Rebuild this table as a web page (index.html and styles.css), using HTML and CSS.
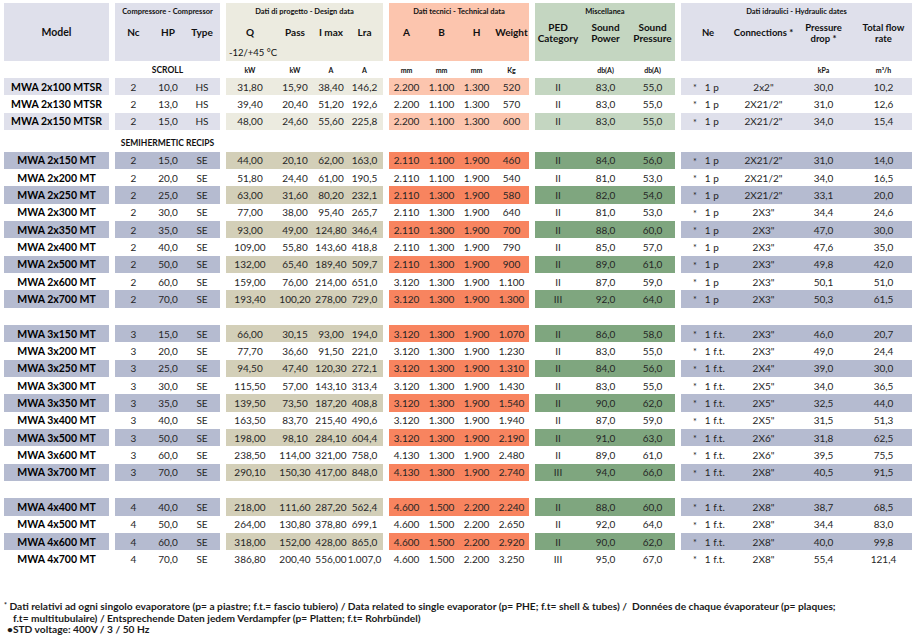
FILE: index.html
```html
<!DOCTYPE html>
<html>
<head>
<meta charset="utf-8">
<title>MWA data</title>
<link rel="stylesheet" href="styles.css">
</head>
<body>
<div class="sheet">
  <div class="row head">
    <div class="g m hl"><span class="mh">Model</span></div>
    <div class="g c hl"><span class="tt">Compressore - Compressor</span><b>Nc</b><b>HP</b><b>Type</b></div>
    <div class="g d hl"><span class="tt">Dati di progetto - Design data</span><b>Q</b><b>Pass</b><b>I max</b><b>Lra</b><span class="temp">-12/+45 °C</span></div>
    <div class="g t hl"><span class="tt">Dati tecnici - Technical data</span><b>A</b><b>B</b><b>H</b><b>Weight</b></div>
    <div class="g x hl"><span class="tt">Miscellanea</span><b>PED<br>Category</b><b>Sound<br>Power</b><b>Sound<br>Pressure</b></div>
    <div class="g h hl"><span class="tt">Dati idraulici - Hydraulic dates</span><b>Ne</b><b>Connections *</b><b>Pressure<br>drop *</b><b>Total flow<br>rate</b></div>
  </div>

  <div class="row units">
    <div class="g m"></div>
    <div class="g c"><span class="sec">SCROLL</span></div>
    <div class="g d"><span>kW</span><span>kW</span><span>A</span><span>A</span></div>
    <div class="g t"><span>mm</span><span>mm</span><span>mm</span><span>Kg</span></div>
    <div class="g x"><span></span><span>db(A)</span><span>db(A)</span></div>
    <div class="g h"><span></span><span></span><span>kPa</span><span>m³/h</span></div>
  </div>

  <div class="row hl">
    <div class="g m"><span>MWA 2x100 MTSR</span></div>
    <div class="g c"><span>2</span><span>10,0</span><span>HS</span></div>
    <div class="g d"><span>31,80</span><span>15,90</span><span>38,40</span><span>146,2</span></div>
    <div class="g t"><span>2.200</span><span>1.100</span><span>1.300</span><span>520</span></div>
    <div class="g x"><span>II</span><span>83,0</span><span>55,0</span></div>
    <div class="g h"><span class="ne"><i>*</i>1 p</span><span>2x2"</span><span>30,0</span><span>10,2</span></div>
  </div>
  <div class="row">
    <div class="g m"><span>MWA 2x130 MTSR</span></div>
    <div class="g c"><span>2</span><span>13,0</span><span>HS</span></div>
    <div class="g d"><span>39,40</span><span>20,40</span><span>51,20</span><span>192,6</span></div>
    <div class="g t"><span>2.200</span><span>1.100</span><span>1.300</span><span>570</span></div>
    <div class="g x"><span>II</span><span>83,0</span><span>55,0</span></div>
    <div class="g h"><span class="ne"><i>*</i>1 p</span><span>2X21/2"</span><span>31,0</span><span>12,6</span></div>
  </div>
  <div class="row hl">
    <div class="g m"><span>MWA 2x150 MTSR</span></div>
    <div class="g c"><span>2</span><span>15,0</span><span>HS</span></div>
    <div class="g d"><span>48,00</span><span>24,60</span><span>55,60</span><span>225,8</span></div>
    <div class="g t"><span>2.200</span><span>1.100</span><span>1.300</span><span>600</span></div>
    <div class="g x"><span>II</span><span>83,0</span><span>55,0</span></div>
    <div class="g h"><span class="ne"><i>*</i>1 p</span><span>2X21/2"</span><span>34,0</span><span>15,4</span></div>
  </div>

  <div class="row label">
    <div class="g m"></div>
    <div class="g c"><span class="sec">SEMIHERMETIC RECIPS</span></div>
  </div>

  <div class="row dk">
    <div class="g m"><span>MWA 2x150 MT</span></div>
    <div class="g c"><span>2</span><span>15,0</span><span>SE</span></div>
    <div class="g d"><span>44,00</span><span>20,10</span><span>62,00</span><span>163,0</span></div>
    <div class="g t"><span>2.110</span><span>1.100</span><span>1.900</span><span>460</span></div>
    <div class="g x"><span>II</span><span>84,0</span><span>56,0</span></div>
    <div class="g h"><span class="ne"><i>*</i>1 p</span><span>2X21/2"</span><span>31,0</span><span>14,0</span></div>
  </div>
  <div class="row">
    <div class="g m"><span>MWA 2x200 MT</span></div>
    <div class="g c"><span>2</span><span>20,0</span><span>SE</span></div>
    <div class="g d"><span>51,80</span><span>24,40</span><span>61,00</span><span>190,5</span></div>
    <div class="g t"><span>2.110</span><span>1.100</span><span>1.900</span><span>540</span></div>
    <div class="g x"><span>II</span><span>81,0</span><span>53,0</span></div>
    <div class="g h"><span class="ne"><i>*</i>1 p</span><span>2X21/2"</span><span>34,0</span><span>16,5</span></div>
  </div>
  <div class="row dk">
    <div class="g m"><span>MWA 2x250 MT</span></div>
    <div class="g c"><span>2</span><span>25,0</span><span>SE</span></div>
    <div class="g d"><span>63,00</span><span>31,60</span><span>80,20</span><span>232,1</span></div>
    <div class="g t"><span>2.110</span><span>1.300</span><span>1.900</span><span>580</span></div>
    <div class="g x"><span>II</span><span>82,0</span><span>54,0</span></div>
    <div class="g h"><span class="ne"><i>*</i>1 p</span><span>2X21/2"</span><span>33,1</span><span>20,0</span></div>
  </div>
  <div class="row">
    <div class="g m"><span>MWA 2x300 MT</span></div>
    <div class="g c"><span>2</span><span>30,0</span><span>SE</span></div>
    <div class="g d"><span>77,00</span><span>38,00</span><span>95,40</span><span>265,7</span></div>
    <div class="g t"><span>2.110</span><span>1.300</span><span>1.900</span><span>640</span></div>
    <div class="g x"><span>II</span><span>81,0</span><span>53,0</span></div>
    <div class="g h"><span class="ne"><i>*</i>1 p</span><span>2X3"</span><span>34,4</span><span>24,6</span></div>
  </div>
  <div class="row dk">
    <div class="g m"><span>MWA 2x350 MT</span></div>
    <div class="g c"><span>2</span><span>35,0</span><span>SE</span></div>
    <div class="g d"><span>93,00</span><span>49,00</span><span>124,80</span><span>346,4</span></div>
    <div class="g t"><span>2.110</span><span>1.300</span><span>1.900</span><span>700</span></div>
    <div class="g x"><span>II</span><span>88,0</span><span>60,0</span></div>
    <div class="g h"><span class="ne"><i>*</i>1 p</span><span>2X3"</span><span>47,0</span><span>30,0</span></div>
  </div>
  <div class="row">
    <div class="g m"><span>MWA 2x400 MT</span></div>
    <div class="g c"><span>2</span><span>40,0</span><span>SE</span></div>
    <div class="g d"><span>109,00</span><span>55,80</span><span>143,60</span><span>418,8</span></div>
    <div class="g t"><span>2.110</span><span>1.300</span><span>1.900</span><span>790</span></div>
    <div class="g x"><span>II</span><span>85,0</span><span>57,0</span></div>
    <div class="g h"><span class="ne"><i>*</i>1 p</span><span>2X3"</span><span>47,6</span><span>35,0</span></div>
  </div>
  <div class="row dk">
    <div class="g m"><span>MWA 2x500 MT</span></div>
    <div class="g c"><span>2</span><span>50,0</span><span>SE</span></div>
    <div class="g d"><span>132,00</span><span>65,40</span><span>189,40</span><span>509,7</span></div>
    <div class="g t"><span>2.110</span><span>1.300</span><span>1.900</span><span>900</span></div>
    <div class="g x"><span>II</span><span>89,0</span><span>61,0</span></div>
    <div class="g h"><span class="ne"><i>*</i>1 p</span><span>2X3"</span><span>49,8</span><span>42,0</span></div>
  </div>
  <div class="row">
    <div class="g m"><span>MWA 2x600 MT</span></div>
    <div class="g c"><span>2</span><span>60,0</span><span>SE</span></div>
    <div class="g d"><span>159,00</span><span>76,00</span><span>214,00</span><span>651,0</span></div>
    <div class="g t"><span>3.120</span><span>1.300</span><span>1.900</span><span>1.100</span></div>
    <div class="g x"><span>II</span><span>87,0</span><span>59,0</span></div>
    <div class="g h"><span class="ne"><i>*</i>1 p</span><span>2X3"</span><span>50,1</span><span>51,0</span></div>
  </div>
  <div class="row dk">
    <div class="g m"><span>MWA 2x700 MT</span></div>
    <div class="g c"><span>2</span><span>70,0</span><span>SE</span></div>
    <div class="g d"><span>193,40</span><span>100,20</span><span>278,00</span><span>729,0</span></div>
    <div class="g t"><span>3.120</span><span>1.300</span><span>1.900</span><span>1.300</span></div>
    <div class="g x"><span>III</span><span>92,0</span><span>64,0</span></div>
    <div class="g h"><span class="ne"><i>*</i>1 p</span><span>2X3"</span><span>50,3</span><span>61,5</span></div>
  </div>

  <div class="row spacer"></div>

  <div class="row dk">
    <div class="g m"><span>MWA 3x150 MT</span></div>
    <div class="g c"><span>3</span><span>15,0</span><span>SE</span></div>
    <div class="g d"><span>66,00</span><span>30,15</span><span>93,00</span><span>194,0</span></div>
    <div class="g t"><span>3.120</span><span>1.300</span><span>1.900</span><span>1.070</span></div>
    <div class="g x"><span>II</span><span>86,0</span><span>58,0</span></div>
    <div class="g h"><span class="ne"><i>*</i>1 f.t.</span><span>2X3"</span><span>46,0</span><span>20,7</span></div>
  </div>
  <div class="row">
    <div class="g m"><span>MWA 3x200 MT</span></div>
    <div class="g c"><span>3</span><span>20,0</span><span>SE</span></div>
    <div class="g d"><span>77,70</span><span>36,60</span><span>91,50</span><span>221,0</span></div>
    <div class="g t"><span>3.120</span><span>1.300</span><span>1.900</span><span>1.230</span></div>
    <div class="g x"><span>II</span><span>83,0</span><span>55,0</span></div>
    <div class="g h"><span class="ne"><i>*</i>1 f.t.</span><span>2X3"</span><span>49,0</span><span>24,4</span></div>
  </div>
  <div class="row dk">
    <div class="g m"><span>MWA 3x250 MT</span></div>
    <div class="g c"><span>3</span><span>25,0</span><span>SE</span></div>
    <div class="g d"><span>94,50</span><span>47,40</span><span>120,30</span><span>272,1</span></div>
    <div class="g t"><span>3.120</span><span>1.300</span><span>1.900</span><span>1.310</span></div>
    <div class="g x"><span>II</span><span>84,0</span><span>56,0</span></div>
    <div class="g h"><span class="ne"><i>*</i>1 f.t.</span><span>2X4"</span><span>39,0</span><span>30,0</span></div>
  </div>
  <div class="row">
    <div class="g m"><span>MWA 3x300 MT</span></div>
    <div class="g c"><span>3</span><span>30,0</span><span>SE</span></div>
    <div class="g d"><span>115,50</span><span>57,00</span><span>143,10</span><span>313,4</span></div>
    <div class="g t"><span>3.120</span><span>1.300</span><span>1.900</span><span>1.430</span></div>
    <div class="g x"><span>II</span><span>83,0</span><span>55,0</span></div>
    <div class="g h"><span class="ne"><i>*</i>1 f.t.</span><span>2X5"</span><span>34,0</span><span>36,5</span></div>
  </div>
  <div class="row dk">
    <div class="g m"><span>MWA 3x350 MT</span></div>
    <div class="g c"><span>3</span><span>35,0</span><span>SE</span></div>
    <div class="g d"><span>139,50</span><span>73,50</span><span>187,20</span><span>408,8</span></div>
    <div class="g t"><span>3.120</span><span>1.300</span><span>1.900</span><span>1.540</span></div>
    <div class="g x"><span>II</span><span>90,0</span><span>62,0</span></div>
    <div class="g h"><span class="ne"><i>*</i>1 f.t.</span><span>2X5"</span><span>32,5</span><span>44,0</span></div>
  </div>
  <div class="row">
    <div class="g m"><span>MWA 3x400 MT</span></div>
    <div class="g c"><span>3</span><span>40,0</span><span>SE</span></div>
    <div class="g d"><span>163,50</span><span>83,70</span><span>215,40</span><span>490,6</span></div>
    <div class="g t"><span>3.120</span><span>1.300</span><span>1.900</span><span>1.940</span></div>
    <div class="g x"><span>II</span><span>87,0</span><span>59,0</span></div>
    <div class="g h"><span class="ne"><i>*</i>1 f.t.</span><span>2X5"</span><span>31,5</span><span>51,3</span></div>
  </div>
  <div class="row dk">
    <div class="g m"><span>MWA 3x500 MT</span></div>
    <div class="g c"><span>3</span><span>50,0</span><span>SE</span></div>
    <div class="g d"><span>198,00</span><span>98,10</span><span>284,10</span><span>604,4</span></div>
    <div class="g t"><span>3.120</span><span>1.300</span><span>1.900</span><span>2.190</span></div>
    <div class="g x"><span>II</span><span>91,0</span><span>63,0</span></div>
    <div class="g h"><span class="ne"><i>*</i>1 f.t.</span><span>2X6"</span><span>31,8</span><span>62,5</span></div>
  </div>
  <div class="row">
    <div class="g m"><span>MWA 3x600 MT</span></div>
    <div class="g c"><span>3</span><span>60,0</span><span>SE</span></div>
    <div class="g d"><span>238,50</span><span>114,00</span><span>321,00</span><span>758,0</span></div>
    <div class="g t"><span>4.130</span><span>1.300</span><span>1.900</span><span>2.480</span></div>
    <div class="g x"><span>II</span><span>89,0</span><span>61,0</span></div>
    <div class="g h"><span class="ne"><i>*</i>1 f.t.</span><span>2X6"</span><span>39,5</span><span>75,5</span></div>
  </div>
  <div class="row dk">
    <div class="g m"><span>MWA 3x700 MT</span></div>
    <div class="g c"><span>3</span><span>70,0</span><span>SE</span></div>
    <div class="g d"><span>290,10</span><span>150,30</span><span>417,00</span><span>848,0</span></div>
    <div class="g t"><span>4.130</span><span>1.300</span><span>1.900</span><span>2.740</span></div>
    <div class="g x"><span>III</span><span>94,0</span><span>66,0</span></div>
    <div class="g h"><span class="ne"><i>*</i>1 f.t.</span><span>2X8"</span><span>40,5</span><span>91,5</span></div>
  </div>

  <div class="row spacer"></div>

  <div class="row dk">
    <div class="g m"><span>MWA 4x400 MT</span></div>
    <div class="g c"><span>4</span><span>40,0</span><span>SE</span></div>
    <div class="g d"><span>218,00</span><span>111,60</span><span>287,20</span><span>562,4</span></div>
    <div class="g t"><span>4.600</span><span>1.500</span><span>2.200</span><span>2.240</span></div>
    <div class="g x"><span>II</span><span>88,0</span><span>60,0</span></div>
    <div class="g h"><span class="ne"><i>*</i>1 f.t.</span><span>2X8"</span><span>38,7</span><span>68,5</span></div>
  </div>
  <div class="row">
    <div class="g m"><span>MWA 4x500 MT</span></div>
    <div class="g c"><span>4</span><span>50,0</span><span>SE</span></div>
    <div class="g d"><span>264,00</span><span>130,80</span><span>378,80</span><span>699,1</span></div>
    <div class="g t"><span>4.600</span><span>1.500</span><span>2.200</span><span>2.650</span></div>
    <div class="g x"><span>II</span><span>92,0</span><span>64,0</span></div>
    <div class="g h"><span class="ne"><i>*</i>1 f.t.</span><span>2X8"</span><span>34,4</span><span>83,0</span></div>
  </div>
  <div class="row dk">
    <div class="g m"><span>MWA 4x600 MT</span></div>
    <div class="g c"><span>4</span><span>60,0</span><span>SE</span></div>
    <div class="g d"><span>318,00</span><span>152,00</span><span>428,00</span><span>865,0</span></div>
    <div class="g t"><span>4.600</span><span>1.500</span><span>2.200</span><span>2.920</span></div>
    <div class="g x"><span>II</span><span>90,0</span><span>62,0</span></div>
    <div class="g h"><span class="ne"><i>*</i>1 f.t.</span><span>2X8"</span><span>40,0</span><span>99,8</span></div>
  </div>
  <div class="row">
    <div class="g m"><span>MWA 4x700 MT</span></div>
    <div class="g c"><span>4</span><span>70,0</span><span>SE</span></div>
    <div class="g d"><span>386,80</span><span>200,40</span><span>556,00</span><span>1.007,0</span></div>
    <div class="g t"><span>4.600</span><span>1.500</span><span>2.200</span><span>3.250</span></div>
    <div class="g x"><span>III</span><span>95,0</span><span>67,0</span></div>
    <div class="g h"><span class="ne"><i>*</i>1 f.t.</span><span>2X8"</span><span>55,4</span><span>121,4</span></div>
  </div>
</div>

<div class="notes">
  <p><span class="st">*</span> Dati relativi ad ogni singolo evaporatore (p= a piastre; f.t.= fascio tubiero) / Data related to single evaporator (p= PHE; f.t= shell &amp; tubes) /&nbsp; Données de chaque évaporateur (p= plaques;</p>
  <p class="ind">f.t= multitubulaire) / Entsprechende Daten jedem Verdampfer (p= Platten; f.t= Rohrbündel)</p>
  <p class="v">•STD voltage: 400V / 3 / 50 Hz</p>
</div>
</body>
</html>
```

FILE: styles.css
```css
html, body {
  margin: 0;
  background: #ffffff;
}

body {
  padding: 3px 6px 0 4px;
  font-family: Lato, "Open Sans", "DejaVu Sans", sans-serif;
  color: #262626;
}

.sheet {
  width: 908px;
  display: flex;
  flex-direction: column;
}

.row {
  display: flex;
  gap: 6px;
  height: 17.33px;
}

.g {
  display: grid;
  align-items: center;
  height: 100%;
}

.g > span,
.g > b {
  display: flex;
  justify-content: center;
  white-space: nowrap;
  font-size: 10px;
}

.m { width: 105px; grid-template-columns: 1fr; }
.c { width: 105px; grid-template-columns: 37px 32px 36px; }
.d { width: 157px; grid-template-columns: 48px 42px 30px 37px; }
.t { width: 140px; grid-template-columns: repeat(4, 35px); }
.x { width: 140px; grid-template-columns: 46px 49px 45px; }
.h { width: 231px; grid-template-columns: 54px 57px 63px 57px; }

.m > span {
  font-weight: 700;
  font-size: 10.5px;
  color: #000;
}

.h > .ne {
  justify-content: flex-start;
  align-items: center;
  padding-left: 12px;
}

.ne i {
  font-style: normal;
  font-size: 9px;
  line-height: 1;
  margin-right: 8px;
  position: relative;
  top: 1px;
}

/* light rows & header */
.hl .m, .hl .c, .hl .h, .head .hl.m, .head .hl.c, .head .hl.h { background: #dfe0eb; }
.hl .d, .head .hl.d { background: #ecebe0; }
.hl .t, .head .hl.t { background: #fcc5ae; }
.hl .x, .head .hl.x { background: #c4d6c1; }

/* dark rows */
.dk .m, .dk .c, .dk .h { background: #b5bbd0; }
.dk .d { background: #d3cfb8; }
.dk .t { background: #f8845f; }
.dk .x { background: #7fa67f; }

/* header */
.head {
  height: 58px;
}

.head .g {
  grid-template-rows: 16px 27px 15px;
  align-items: center;
}

.head .m {
  grid-template-rows: 1fr;
}

.head .g > .tt {
  grid-column: 1 / -1;
  font-size: 7.5px;
  font-weight: 700;
  color: #111;
  padding-top: 1px;
}

.head .g > b {
  font-size: 10px;
  font-weight: 700;
  color: #111;
  text-align: center;
  line-height: 11px;
}

.head .h > b {
  font-size: 9.5px;
}

.head .m > .mh {
  font-size: 10.5px;
  font-weight: 700;
  color: #111;
}

.head .d > .temp {
  grid-column: 1 / 3;
  justify-content: flex-start;
  padding-left: 3px;
  font-size: 9.5px;
  align-self: start;
  margin-top: 1px;
  color: #111;
}

/* units */
.units {
  height: 17px;
}

.units .g > span {
  font-size: 7px;
  font-weight: 700;
  color: #111;
}

.units .g > .sec,
.label .g > .sec {
  grid-column: 1 / -1;
  font-size: 8.5px;
  font-weight: 700;
  color: #111;
}

.label {
  height: 21.67px;
}

.label .g {
  padding-top: 4px;
  box-sizing: border-box;
}

.label .c {
  grid-template-columns: 1fr;
}

.spacer {
  height: 17.33px;
}

/* notes */
.notes {
  margin-top: 33px;
  font-size: 10.2px;
  font-weight: 700;
  color: #1a1a1a;
}

.notes p {
  margin: 0;
  line-height: 11px;
  white-space: nowrap;
}

.notes .st {
  font-size: 7px;
  position: relative;
  top: -2px;
}

.notes .ind {
  padding-left: 9px;
}

.notes .v {
  padding-left: 3px;
}
```
